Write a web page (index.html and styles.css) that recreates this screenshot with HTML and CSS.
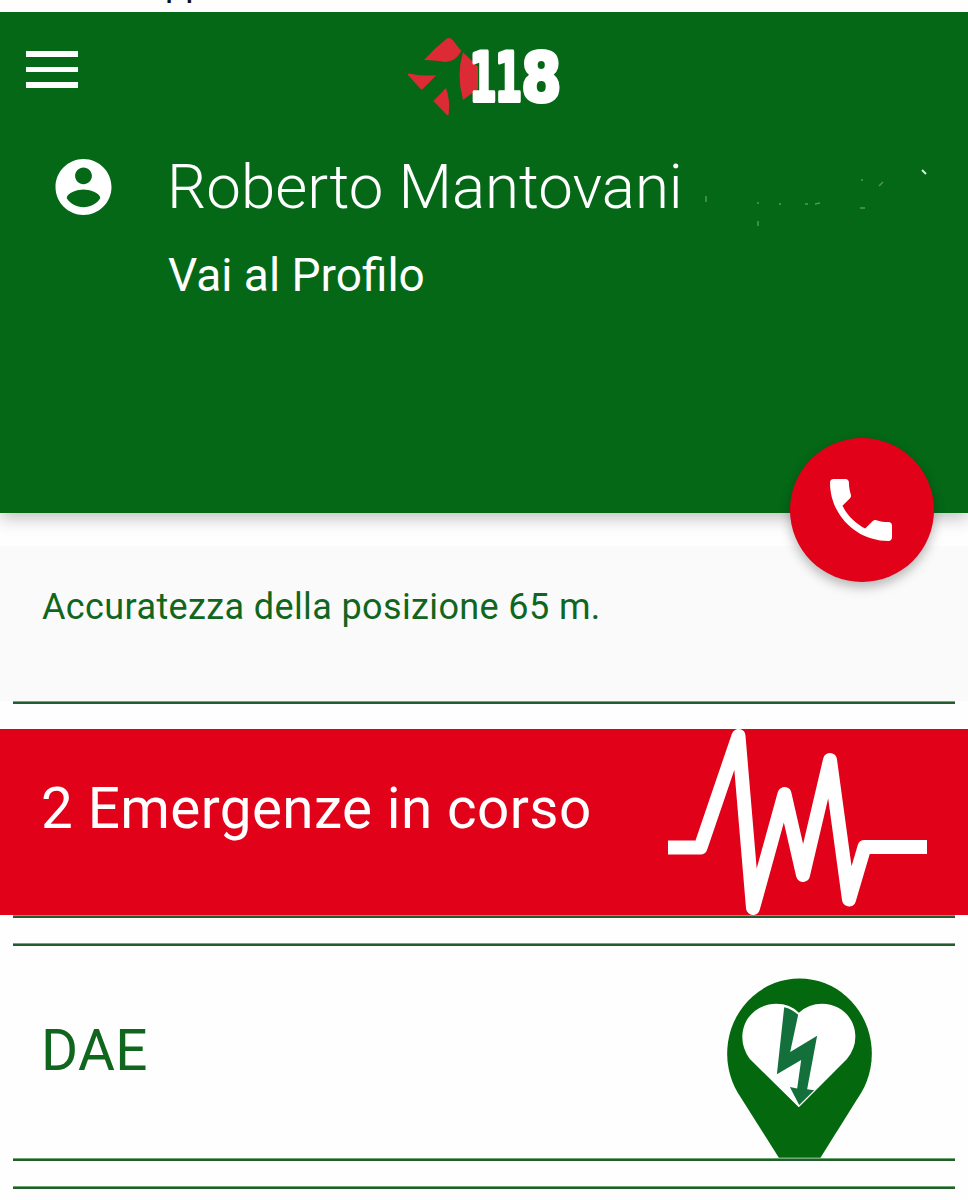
FILE: index.html
```html
<!DOCTYPE html>
<html lang="it">
<head>
<meta charset="UTF-8">
<title>118</title>
<link rel="stylesheet" href="styles.css">
</head>
<body>
<div class="topline"><span class="topline_text">pp</span></div>

<!-- шапка -->
<header class="header">
	<div class="header_bar">
		<div class="menu_button"><span></span><span></span><span></span></div>
		<svg class="logo" viewBox="45 45 474 249">
			<g fill="#dc2b35">
				<path d="M102 120Q135 84 168 58Q178 49 188 60L214 93Q196 126 165 126Q140 121 102 120Z"/>
				<path d="M219 97L264 140V207L219 239Q198 165 219 97Z"/>
				<path d="M53 164Q54 160 62 161Q95 169 139 166L98 207Q94 210 90 205Z"/>
				<path d="M168 204Q181 240 176 283Q175 288 171 285L130 243Z"/>
			</g>
			<g class="logo_text">
				<text transform="translate(238 242) scale(.59 1)">1</text>
				<text transform="translate(314 242) scale(.59 1)">1</text>
				<text transform="translate(394 242) scale(.86 1)">8</text>
			</g>
		</svg>
	</div>
	<div class="profile">
		<svg class="profile_icon" viewBox="2 2 20 20"><path fill="#fff" d="M12 2C6.48 2 2 6.48 2 12s4.48 10 10 10 10-4.48 10-10S17.52 2 12 2zm0 3c1.66 0 3 1.34 3 3s-1.34 3-3 3-3-1.34-3-3 1.34-3 3-3zm0 14.2c-2.5 0-4.71-1.28-6-3.22.03-1.99 4-3.08 6-3.08 1.99 0 5.97 1.09 6 3.08-1.29 1.94-3.5 3.22-6 3.22z"/></svg>
		<div class="profile_info">
			<div class="profile_name">Roberto Mantovani</div>
			<div class="profile_link">Vai al Profilo</div>
		</div>
		<svg class="specks" viewBox="0 0 240 70">
			<path stroke="#d9f0da" stroke-width="2" d="M222 10l4 4"/>
			<path stroke="#4f9a58" stroke-width="1.5" d="M179 26l4-4M58 61v5M6 36v6M115 44l5-1M160 48h5M57 43h2M79 44h2M105 44h3M162 19v2"/>
		</svg>
	</div>
	<div class="call_button">
		<svg class="call_icon" viewBox="3 3 18 18"><path fill="#fff" d="M6.62 10.79c1.44 2.83 3.76 5.14 6.59 6.59l2.2-2.2c.27-.27.67-.36 1.02-.24 1.12.37 2.33.57 3.57.57.55 0 1 .45 1 1V20c0 .55-.45 1-1 1-9.39 0-17-7.61-17-17 0-.55.45-1 1-1h3.5c.55 0 1 .45 1 1 0 1.25.2 2.45.57 3.57.11.35.03.74-.25 1.02l-2.2 2.2z"/></svg>
	</div>
</header>

<div class="accuracy">Accuratezza della posizione 65 m.</div>
<div class="line"></div>

<!-- список -->
<div class="card card_red">
	<div class="card_title">2 Emergenze in corso</div>
	<svg class="pulse" viewBox="668 729 259 186">
		<path fill="none" stroke="#fff" stroke-width="14" stroke-linejoin="round" d="M668 847.5H700.5L738.5 736L753 908L784.500 794L803 875L830 760L849 899.500L864.500 847H927"/>
	</svg>
</div>
<div class="line"></div>

<div class="line line_next"></div>
<div class="card card_dae">
	<div class="card_title">DAE</div>
	<svg class="pin" viewBox="80 56 436 540">
		<path fill="#04680f" d="M236 596L112 400A217.500 226 0 1 1 484 400L361 596Z"/>
		<path fill="#fff" d="M296 444L148 298Q126 268 126 232C128 170 175 133 228 133Q270 133 296 160Q326 133 366 133C420 133 466 174 466 232Q466 268 440 300Z"/>
		<path fill="#14703a" d="M252 143Q275 148 294 166L270 278L351 229L321 390L342 393L297 437L269 383L291 388L303 302L230 345Z"/>
	</svg>
</div>
<div class="line"></div>
<div class="line line_next"></div>
</body>
</html>
```
FILE: styles.css
```css
body {
	margin: 0;
	height: 1200px;
	overflow: hidden;
	background: #fefefe;
	font-family: Roboto, sans-serif;
}

/*обрезанная строка сверху*/
.topline {
	position: relative;
	z-index: 1;
	height: 12px;
	overflow: hidden;
	padding-left: 165px;
	background: #fefefe;
	color: #111;
	font-size: 36px;
}
.topline_text {
	display: block;
	line-height: 36px;
	margin-top: -35px;
}

/*шапка*/
.header {
	position: relative;
	height: 501px;
	background: #046817;
	color: #fff;
	box-shadow: 0 5px 16px rgba(0, 0, 0, 0.25);
}
.header_bar {
	display: grid;
	grid-template-columns: 1fr 158px 1fr;
	padding-top: 23px;
}
.menu_button {
	display: flex;
	flex-direction: column;
	gap: 10px;
	width: 52px;
	padding: 16px 0 0 26px;
}
.menu_button span {
	height: 5.5px;
	background: #fff;
}
.logo {
	width: 158px;
	height: 83px;
}
.logo_text {
	fill: #fff;
	stroke: #fff;
	stroke-width: 12px;
	stroke-linejoin: round;
	font-family: "DejaVu Sans", sans-serif;
	font-weight: bold;
	font-size: 201px;
}
.profile {
	display: flex;
	align-items: flex-start;
	padding: 31px 0 0 55px;
}
.profile_icon {
	width: 57px;
	height: 56px;
	margin-top: 10px;
}
.profile_info {
	width: 538px;
	padding-left: 56px;
}
.profile_name {
	margin-left: -1px;
	font-size: 61.8px;
	font-weight: 300;
	line-height: 76px;
	white-space: nowrap;
}
.profile_link {
	margin-top: 22px;
	font-size: 46px;
	line-height: 56px;
}
.specks {
	width: 240px;
	height: 70px;
	margin: 11px 0 0 -6px;
	fill: none;
}
.call_button {
	position: absolute;
	right: 34px;
	bottom: -69px;
	display: flex;
	align-items: center;
	justify-content: center;
	width: 144px;
	height: 144px;
	border-radius: 50%;
	background: #e10118;
	box-shadow: 0 5px 12px rgba(0, 0, 0, 0.28);
}
.call_icon {
	width: 62px;
	height: 62px;
	margin-right: 2px;
}

.accuracy {
	height: 118px;
	margin-top: 33px;
	padding: 37px 0 0 42px;
	background: #fafafa;
	color: #11661d;
	font-size: 36px;
	line-height: 48px;
	letter-spacing: 0.38px;
}
.line {
	height: 2px;
	margin: 0 13px;
	background: #235d2d;
	border-top: 1px solid #6da875;
}

/*карточки*/
.card {
	display: flex;
	justify-content: space-between;
}
.card_title {
	padding-left: 41px;
	font-size: 56.6px;
	line-height: 70px;
	letter-spacing: 0.4px;
}
.card_red {
	height: 186px;
	margin-top: 25px;
	background: #e10118;
	color: #fff;
}
.card_red .card_title {
	padding-top: 45px;
}
.pulse {
	width: 259px;
	height: 186px;
	margin-right: 41px;
}
.line_next {
	margin-top: 25px;
}
.card_dae {
	height: 212px;
	color: #11661d;
}
.card_dae .card_title {
	padding-top: 70px;
}
.pin {
	width: 145px;
	height: 180px;
	margin: 32px 96px 0 0;
}
```
